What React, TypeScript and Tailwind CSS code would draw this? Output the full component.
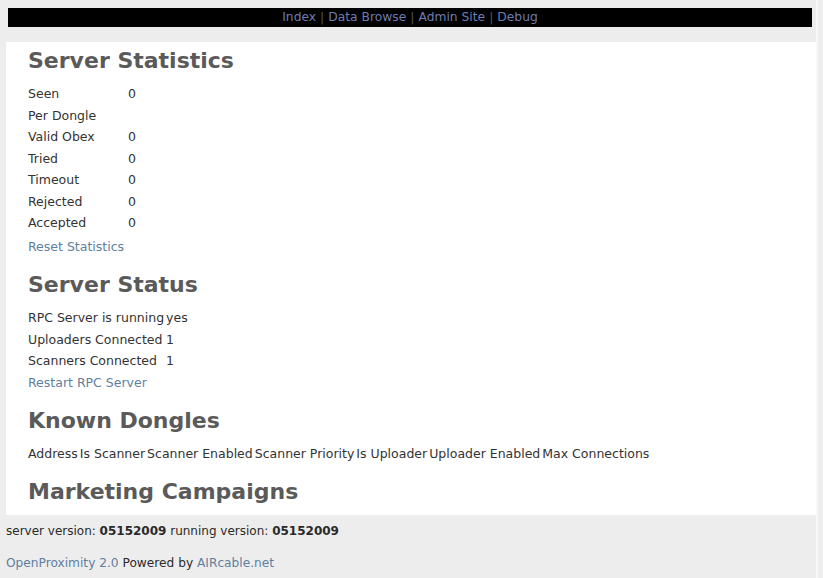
import React from 'react';

const stats: [string, string][] = [
    ['Seen', '0'],
    ['Per Dongle', ''],
    ['Valid Obex', '0'],
    ['Tried', '0'],
    ['Timeout', '0'],
    ['Rejected', '0'],
    ['Accepted', '0'],
];

const status: [string, string][] = [
    ['RPC Server is running', 'yes'],
    ['Uploaders Connected', '1'],
    ['Scanners Connected', '1'],
];

const dongleCols = [
    'Address',
    'Is Scanner',
    'Scanner Enabled',
    'Scanner Priority',
    'Is Uploader',
    'Uploader Enabled',
    'Max Connections',
];

function Heading({ children, mt }: { children: React.ReactNode; mt: string }) {
    return (
        <h1 className={`${mt} mb-[9px] text-[22px] leading-[26px] font-bold text-[#5a5a5a]`}>
            {children}
        </h1>
    );
}

export default function App() {
    return (
        <div className="min-h-screen bg-[#ededed] text-[12px] text-[#2a2a2a] font-['DejaVu_Sans',sans-serif]">
            <div className="w-[818px] min-h-screen border-r-2 border-[#f7f7f7]">
                {/* top nav */}
                <div className="pt-[8px] pl-[8px] pr-[4px]">
                    <div className="h-[19px] bg-black flex items-center justify-center leading-none text-[12.3px]">
                        <a className="text-[#6e7cb0]">Index</a>
                        <span className="mx-[4px] text-[#555]">|</span>
                        <a className="text-[#6e7cb0]">Data Browse</a>
                        <span className="mx-[4px] text-[#555]">|</span>
                        <a className="text-[#6e7cb0]">Admin Site</a>
                        <span className="mx-[4px] text-[#555]">|</span>
                        <a className="text-[#6e7cb0]">Debug</a>
                    </div>
                </div>

                {/* main content box */}
                <div className="mt-[15px] ml-[6px] w-[810px] bg-white px-[22px] pt-px pb-px text-[12.5px] text-[#333]">
                    <Heading mt="mt-[5px]">Server Statistics</Heading>
                    <div className="flex flex-col">
                        {stats.map(([label, value]) => (
                            <div key={label} className="flex leading-[21.5px]">
                                <span className="w-[100px]">{label}</span>
                                <span>{value}</span>
                            </div>
                        ))}
                    </div>
                    <a className="block mt-[2px] leading-[21.5px] text-[#5f7f9f]">Reset Statistics</a>

                    <Heading mt="mt-[15px]">Server Status</Heading>
                    <div className="grid grid-cols-[auto_auto] justify-start gap-x-[2px] leading-[21.5px]">
                        {status.map(([label, value]) => (
                            <React.Fragment key={label}>
                                <span>{label}</span>
                                <span>{value}</span>
                            </React.Fragment>
                        ))}
                    </div>
                    <a className="block leading-[21.5px] text-[#5f7f9f]">Restart RPC Server</a>

                    <Heading mt="mt-[15px]">Known Dongles</Heading>
                    <div className="flex gap-x-[2px] leading-[21.5px]">
                        {dongleCols.map((c) => (
                            <span key={c}>{c}</span>
                        ))}
                    </div>

                    <Heading mt="mt-[14px]">Marketing Campaigns</Heading>
                </div>

                {/* footer */}
                <div className="pl-[6px] pt-[6px] leading-[21.5px]">
                    <p>
                        server version: <b>05152009</b> running version: <b>05152009</b>
                    </p>
                    <p className="mt-[11px] text-[12.2px]">
                        <a className="text-[#5f7f9f]">OpenProximity 2.0</a> Powered by{' '}
                        <a className="text-[#5f7f9f]">AIRcable.net</a>
                    </p>
                </div>
            </div>
        </div>
    );
}
